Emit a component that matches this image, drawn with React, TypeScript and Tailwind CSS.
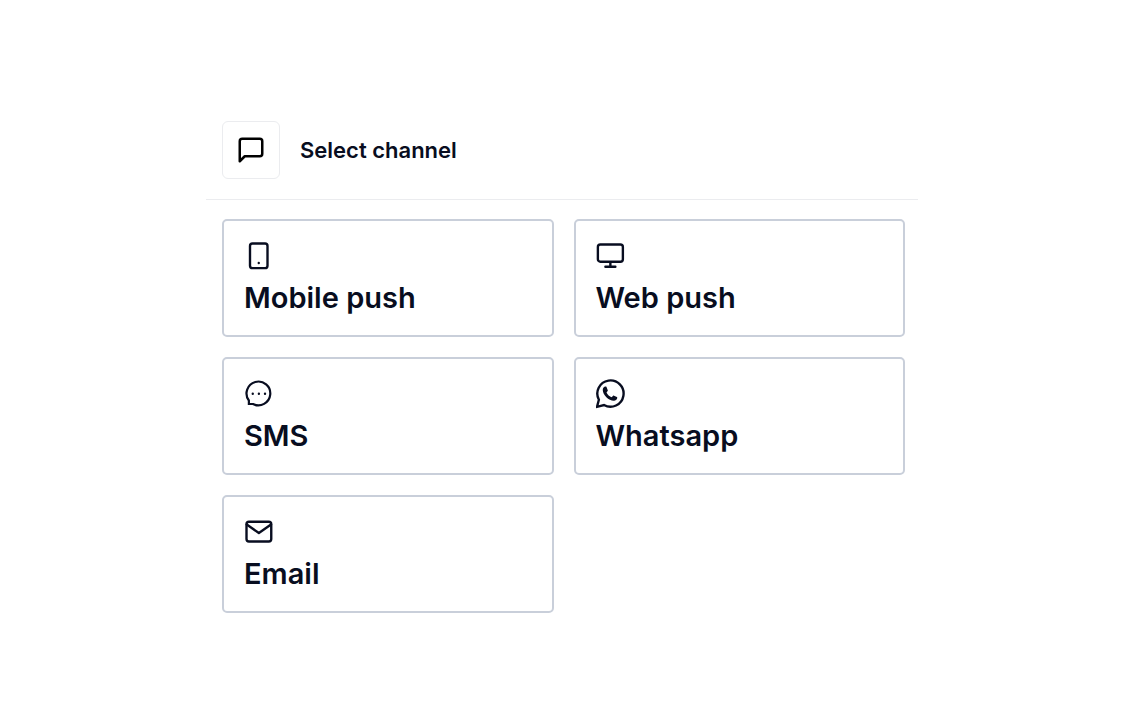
import type { ReactNode } from "react";

type IconProps = { children: ReactNode };

function LineIcon({ children }: IconProps) {
  return (
    <svg
      viewBox="0 0 24 24"
      className="size-[30px]"
      fill="none"
      stroke="currentColor"
      strokeWidth="1.9"
      strokeLinecap="round"
      strokeLinejoin="round"
      aria-hidden="true"
    >
      {children}
    </svg>
  );
}

const channels = [
  {
    name: "Mobile push",
    icon: (
      <LineIcon>
        <rect x="4.8" y="2" width="14" height="19.7" rx="2" />
        <path d="M11.8 17.6h.01" />
      </LineIcon>
    ),
  },
  {
    name: "Web push",
    icon: (
      <LineIcon>
        <rect x="1.5" y="2.8" width="20" height="13.8" rx="2" />
        <path d="M7.5 20.6h8M11.5 17v3.6" />
      </LineIcon>
    ),
  },
  {
    name: "SMS",
    icon: (
      <LineIcon>
        <path
          strokeWidth="1.75"
          strokeLinejoin="miter"
          d="M7.2 20H3.9V17.2A9.5 9.5 0 1 1 7.2 20z"
        />
        <path d="M7 11.8h.01M11.9 11.8h.01M16.8 11.8h.01" />
      </LineIcon>
    ),
  },
  {
    name: "Whatsapp",
    icon: (
      <LineIcon>
        <g transform="translate(-.5 0)">
          <path
            strokeLinejoin="miter"
            d="M1.3 22.3l1.5-5.7A10.5 10.5 0 1 1 6.9 20.8z"
          />
          <path
            fill="currentColor"
            stroke="none"
            d="M8.1 6C6.9 6 5.9 7.2 5.9 8.7c0 3.9 4.8 8.6 8.9 8.6 1.5 0 2.7-1.1 2.7-2.4 0-.2-.1-.4-.3-.5l-2.3-1.1c-.2-.1-.5-.1-.7.1l-1.2 1.2C11.4 14 9.6 12.3 8.9 10.7l.9-1.2c.2-.2.2-.4.1-.6l-1-2.5C8.8 6.1 8.5 6 8.1 6z"
          />
        </g>
      </LineIcon>
    ),
  },
  {
    name: "Email",
    icon: (
      <LineIcon>
        <rect x="2" y="3.8" width="19.8" height="15.8" rx="2" />
        <path d="M2.2 6l9.7 6.8L21.6 6" />
      </LineIcon>
    ),
  },
];

export default function App() {
  return (
    <main className="min-h-screen bg-white px-4 py-[121px] font-['Inter',sans-serif] text-[#080d20]">
      <section className="mx-auto max-w-[712px]">
        {/* Header */}
        <header className="flex items-center gap-5 border-b border-[#ebecef] px-4 pb-5">
          <div className="flex size-[58px] items-center justify-center rounded-md border border-[#ebecef] text-black">
            <svg
              viewBox="0 0 24 24"
              className="size-[30px]"
              fill="none"
              stroke="currentColor"
              strokeWidth="2"
              strokeLinecap="round"
              strokeLinejoin="round"
              aria-hidden="true"
            >
              <path d="M21 15a2 2 0 0 1-2 2H7l-4 4V5a2 2 0 0 1 2-2h14a2 2 0 0 1 2 2z" />
            </svg>
          </div>
          <h1 className="text-[22px] leading-8 font-semibold">Select channel</h1>
        </header>

        {/* Channels */}
        <div className="grid gap-5 pt-[19px] pr-[13px] pl-4 sm:grid-cols-2">
          {channels.map((channel) => (
            <button
              key={channel.name}
              type="button"
              className="flex cursor-pointer flex-col items-start gap-[9px] rounded-[5px] border-2 border-[#c9cfda] px-5 pt-5 pb-[19px] text-left"
            >
              {channel.icon}
              <span className="text-[29px] leading-9 font-semibold">
                {channel.name}
              </span>
            </button>
          ))}
        </div>
      </section>
    </main>
  );
}
